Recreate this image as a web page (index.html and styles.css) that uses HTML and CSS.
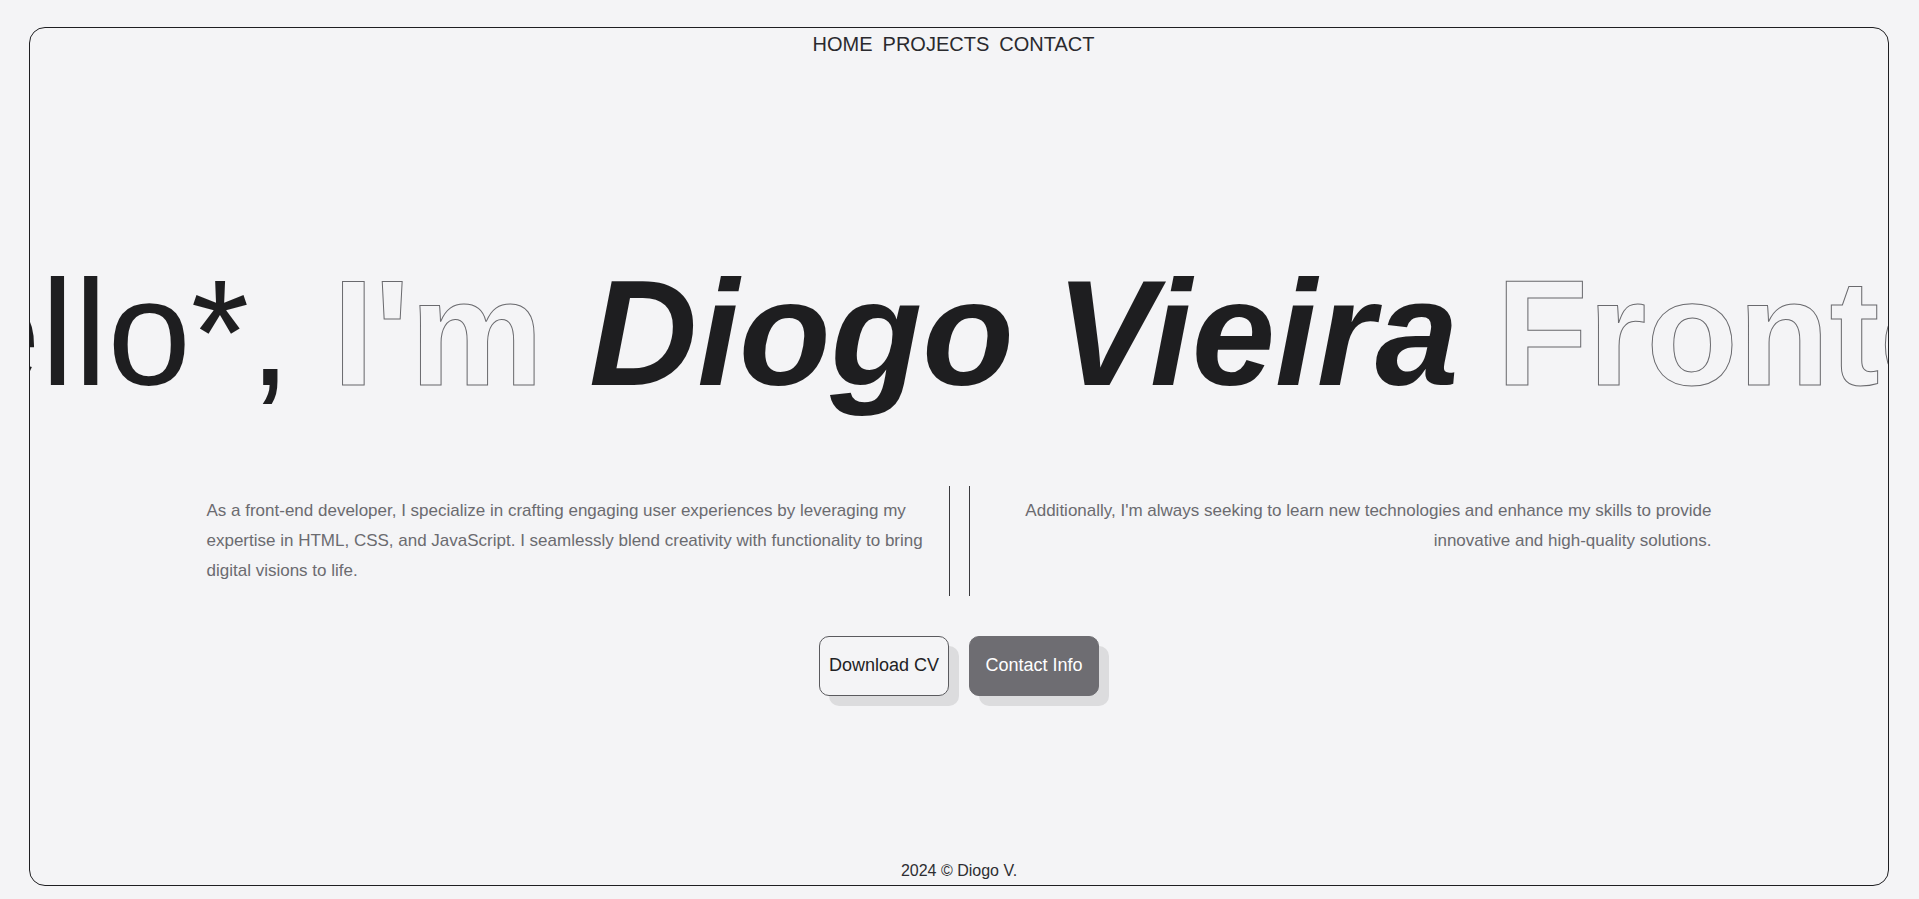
FILE: index.html
```html
<!DOCTYPE html>
<html lang="en">
<head>
<meta charset="utf-8">
<title>Diogo Vieira</title>
<link rel="stylesheet" href="styles.css">
</head>
<body>
<div class="frame">
  <nav class="nav">
    <a href="#" class="nav-link">HOME</a>
    <a href="#" class="nav-link">PROJECTS</a>
    <a href="#" class="nav-link">CONTACT</a>
  </nav>
  <section class="hero">
    <div class="marquee">
      <h1 class="marquee-track"><span class="plain">Hello*,</span> <span class="outline">I'm</span> <em class="name">Diogo Vieira</em> <span class="outline">Frontend Developer</span></h1>
    </div>
    <div class="about">
      <p class="about-text about-left">As a front-end developer, I specialize in crafting engaging user experiences by leveraging my expertise in HTML, CSS, and JavaScript. I seamlessly blend creativity with functionality to bring digital visions to life.</p>
      <span class="divider"></span>
      <span class="divider"></span>
      <p class="about-text about-right">Additionally, I'm always seeking to learn new technologies and enhance my skills to provide innovative and high-quality solutions.</p>
    </div>
    <div class="actions">
      <a href="#" class="btn btn-outline">Download CV</a>
      <a href="#" class="btn btn-filled">Contact Info</a>
    </div>
  </section>
  <footer class="footer">2024 © Diogo V.</footer>
</div>
</body>
</html>
```
FILE: styles.css
```css
html, body {
  margin: 0;
  padding: 0;
}
body {
  background: #f4f4f6;
  font-family: "Liberation Sans", Arial, Helvetica, sans-serif;
  color: #1e1e20;
}
.frame {
  box-sizing: border-box;
  margin: 27px 30px 0 29px;
  height: 859px;
  border: 1px solid #1f1f22;
  border-radius: 16px;
  overflow: hidden;
  display: flex;
  flex-direction: column;
}
.nav {
  display: flex;
  justify-content: center;
  gap: 10px;
  padding: 5px 11px 0 0;
}
.nav-link {
  font-size: 20px;
  line-height: 23px;
  color: #2a2a2e;
  text-decoration: none;
}
.hero {
  display: flex;
  flex-direction: column;
  align-items: center;
}
.marquee {
  align-self: stretch;
  overflow: hidden;
  margin-top: 192px;
  padding: 10px 0 40px;
}
.marquee-track {
  margin: 0;
  font-size: 150px;
  line-height: 150px;
  font-weight: 400;
  white-space: nowrap;
  transform: translateX(-181px);
  color: #1e1e20;
}
.plain {
  font-weight: 400;
}
.outline {
  font-weight: 700;
  color: transparent;
  -webkit-text-stroke: 1px #6a6a6e;
}
.name {
  font-weight: 700;
  font-style: italic;
  margin-left: 4px;
  margin-right: -4px;
}
.about {
  display: flex;
  align-items: stretch;
  height: 110px;
  margin-top: 38px;
}
.about-text {
  width: 720px;
  margin: 0;
  padding-top: 10px;
  font-size: 17px;
  line-height: 30px;
  color: #6b6b70;
}
.about-left {
  margin-right: 22px;
}
.about-right {
  margin-left: 22px;
  text-align: right;
}
.divider {
  width: 1px;
  background: #3a3a3e;
}
.divider + .divider {
  margin-left: 19px;
}
.actions {
  display: flex;
  gap: 20px;
  margin-top: 40px;
}
.btn {
  box-sizing: border-box;
  width: 130px;
  height: 60px;
  padding-bottom: 1px;
  display: flex;
  align-items: center;
  justify-content: center;
  border-radius: 10px;
  font-size: 18px;
  text-decoration: none;
  box-shadow: 10px 10px 0 #dcdcde;
}
.btn-outline {
  border: 1px solid #5a5a5e;
  background: #f4f4f6;
  color: #222224;
}
.btn-filled {
  border: 1px solid #6e6d72;
  background: #6e6d72;
  color: #ffffff;
}
.footer {
  margin-top: auto;
  padding-bottom: 5px;
  text-align: center;
  font-size: 16px;
  line-height: 18px;
  color: #2e2e32;
}
```
